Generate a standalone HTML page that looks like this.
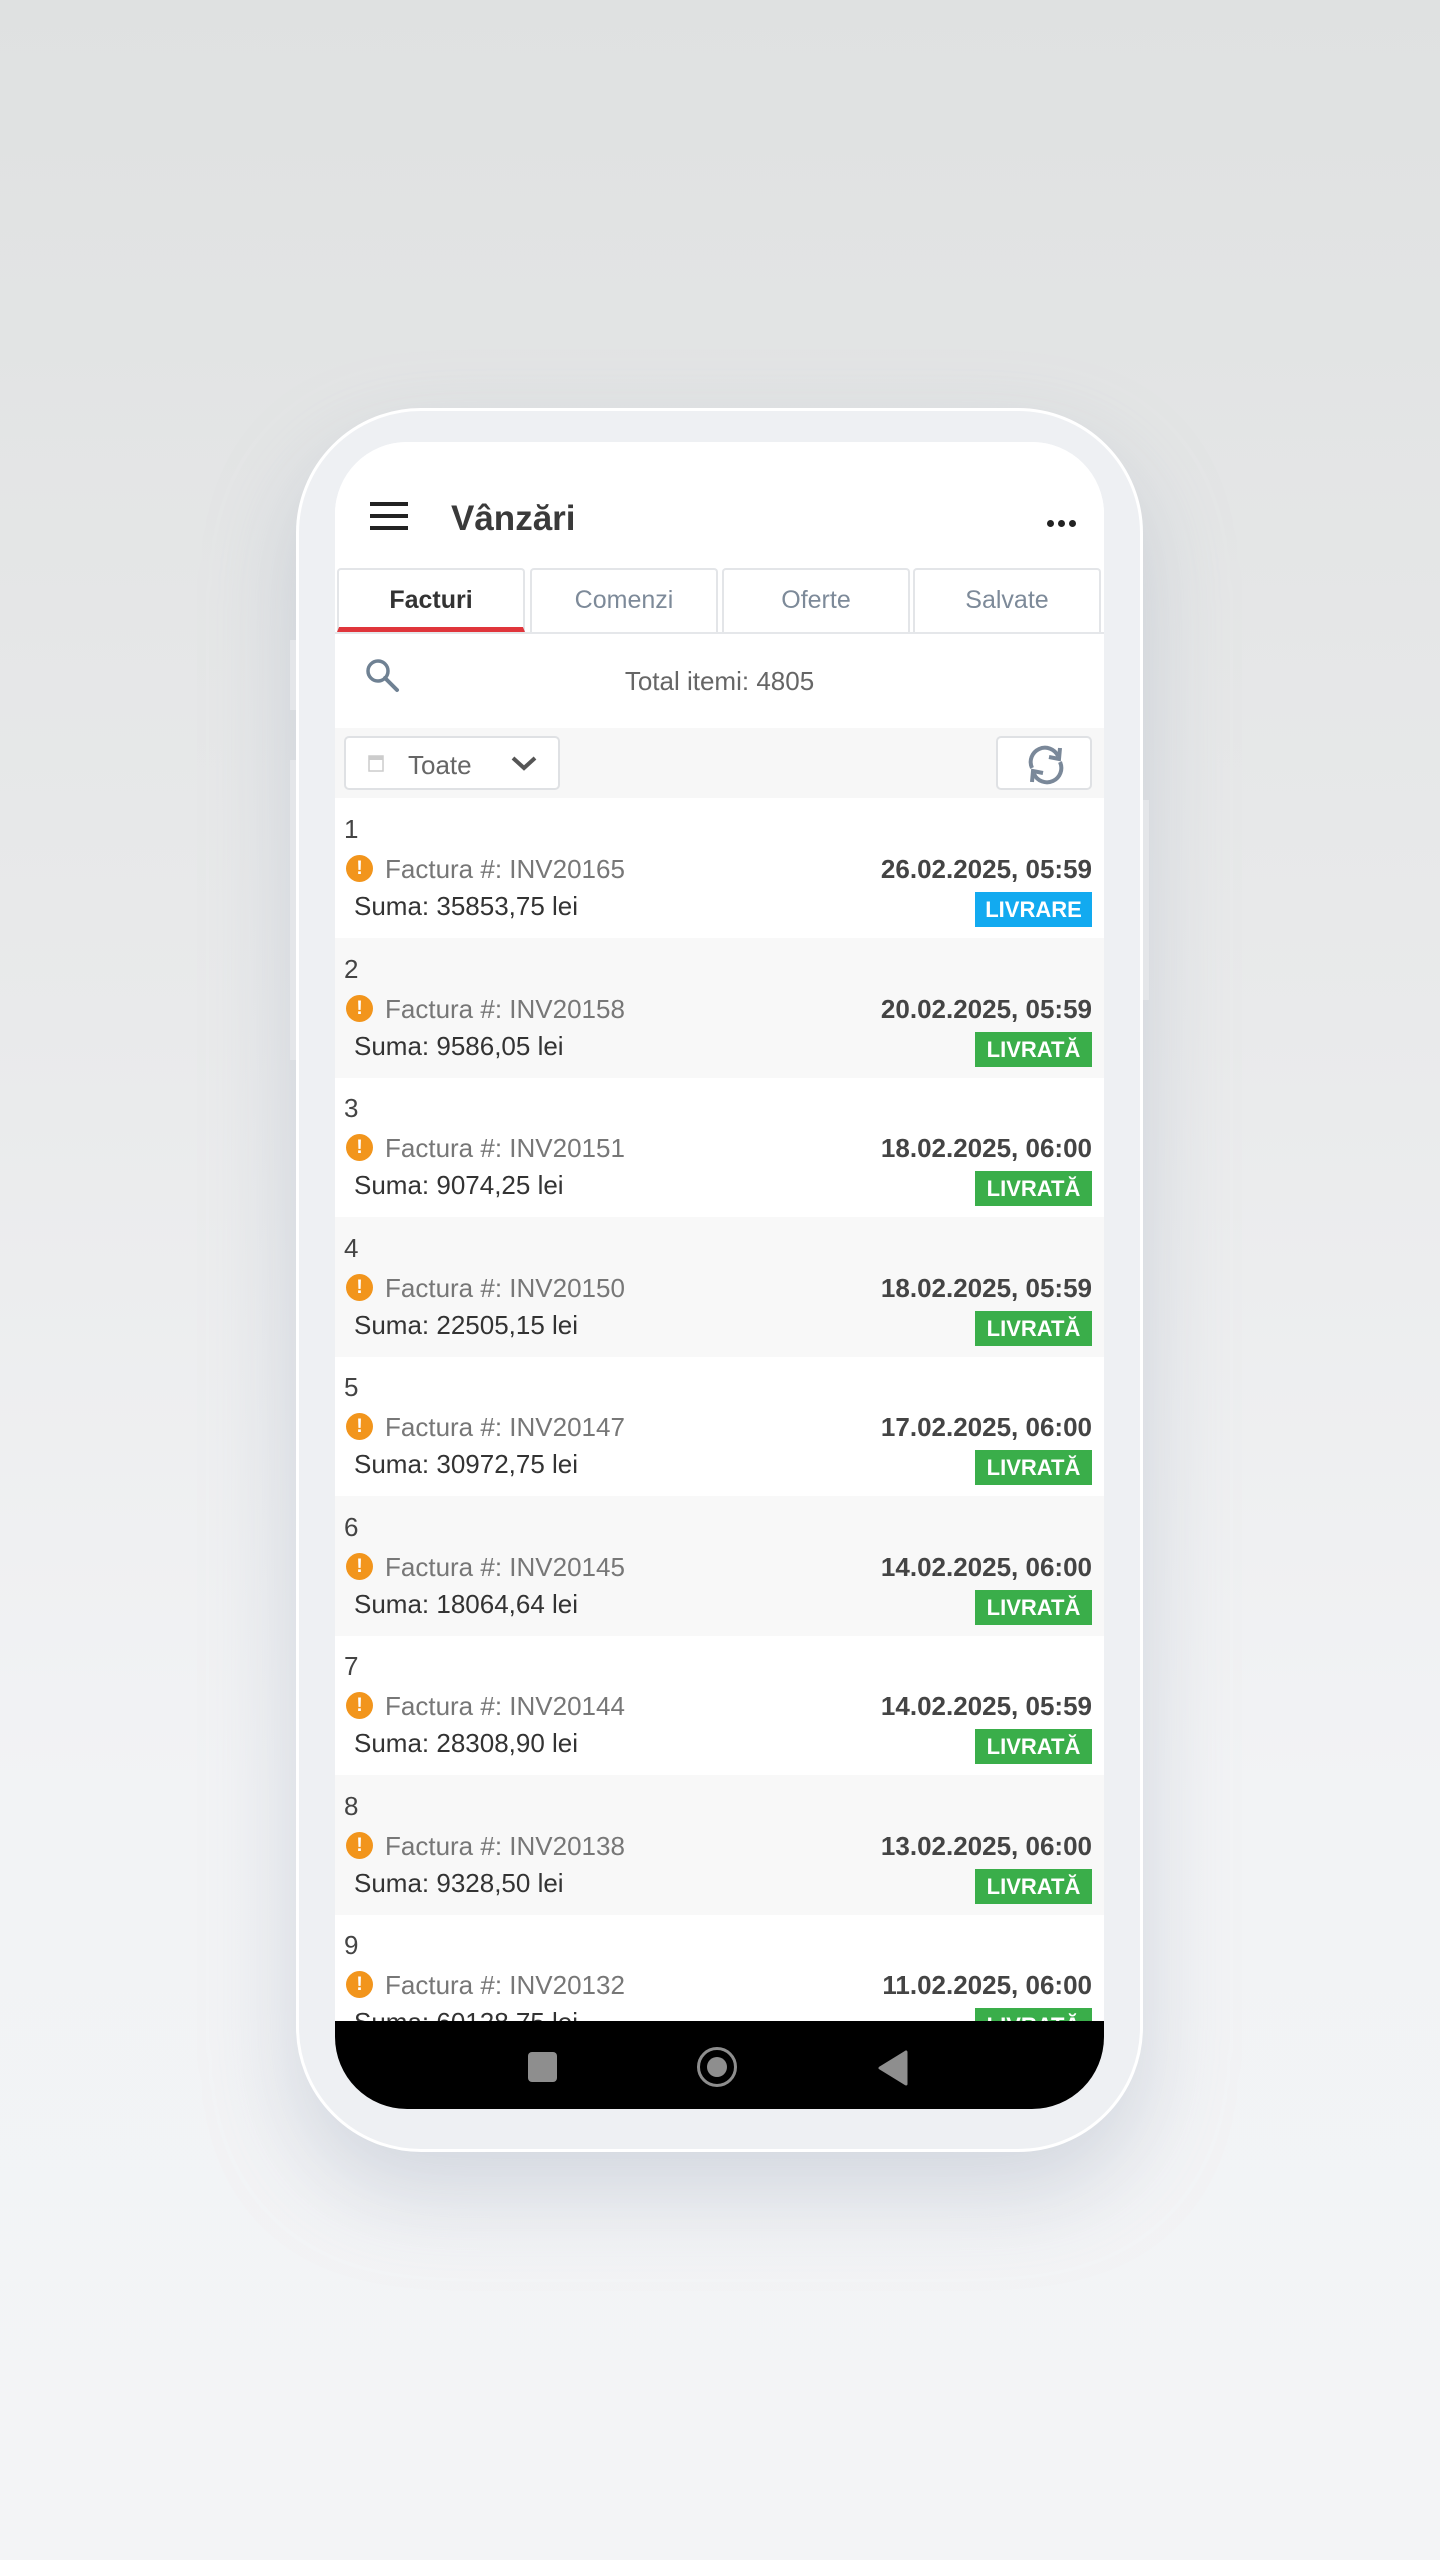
<!DOCTYPE html>
<html><head><meta charset="utf-8"><style>
*{margin:0;padding:0;box-sizing:border-box}
body{width:1440px;height:2560px;background:linear-gradient(#dfe1e1 0%,#e9eaeb 40%,#f2f3f5 70%,#f3f4f6 100%);font-family:"Liberation Sans",sans-serif;position:relative;overflow:hidden}
.phone{position:absolute;left:296px;top:408px;width:847px;height:1744px;border-radius:125px;background:#eef0f3;border:3px solid #fff;box-shadow:0 40px 90px rgba(150,160,180,.35)}
.btn{position:absolute;background:#e4e6e9;width:6px}
.screen{position:absolute;left:335px;top:442px;width:769px;height:1667px;border-radius:72px;background:#fff;overflow:hidden}
.hdr{position:absolute;left:0;top:0;width:769px;height:124px;background:#fff}
.ham{position:absolute;left:35px;top:60px;width:38px;height:28px}
.ham i{display:block;height:4px;background:#222;margin-bottom:8px}
.title{position:absolute;left:116px;top:57px;font-size:35px;color:#3a3a3a;font-weight:bold}
.dots{position:absolute;right:28px;top:72px}
.dots i{display:inline-block;width:7px;height:7px;border-radius:50%;background:#222;margin-left:4px}
.tabs{position:absolute;top:124px;left:0;width:769px;height:68px;border-bottom:2px solid #e5e7ea}
.tab{position:absolute;top:2px;height:64px;width:188px;border:2px solid #e3e5e8;border-bottom:none;border-radius:4px 4px 0 0;text-align:center;line-height:60px;font-size:25px;color:#7d8a99}
.tab.a{color:#333;border-bottom:5px solid #e0353b;font-weight:bold}
.srch{position:absolute;top:192px;left:0;width:769px;height:94px}
.total{position:absolute;left:0;width:769px;text-align:center;top:32px;font-size:26px;color:#666}
.filt{position:absolute;top:286px;left:0;width:769px;height:70px;background:#f7f7f7}
.box{position:absolute;background:#fff;border:2px solid #dfe1e4;border-radius:5px}
.row{position:absolute;left:0;width:769px;height:140px}
.row.g{background:#f8f8f8}
.n{position:absolute;left:9px;top:16px;font-size:26px;color:#444}
.ic{position:absolute;left:11px;top:57px;width:27px;height:27px;border-radius:50%;background:#f2951c;color:#fff;font-size:19px;font-weight:bold;text-align:center;line-height:27px}
.f{position:absolute;left:50px;top:56px;font-size:26px;color:#777}
.s{position:absolute;left:19px;top:93px;font-size:26px;color:#333}
.d{position:absolute;right:12px;top:56px;font-size:26px;color:#444;font-weight:bold}
.b{position:absolute;right:12px;top:94px;height:35px;width:117px;background:#3aae4a;color:#fff;font-weight:bold;font-size:22px;text-align:center;line-height:36px}
.b.l{background:#12aaf0}
.nav{position:absolute;left:0;top:1579px;width:769px;height:88px;background:#000}
</style></head><body>
<div class="phone"></div>
<div class="btn" style="left:290px;top:640px;height:70px"></div>
<div class="btn" style="left:290px;top:760px;height:300px"></div>
<div class="btn" style="left:1143px;top:800px;height:200px"></div>
<div class="screen">
<div class="hdr">
<div class="ham"><i></i><i></i><i></i></div>
<div class="title">Vânzări</div>
<div class="dots"><i></i><i></i><i></i></div>
</div>
<div class="tabs">
<div class="tab a" style="left:2px">Facturi</div>
<div class="tab" style="left:195px">Comenzi</div>
<div class="tab" style="left:387px">Oferte</div>
<div class="tab" style="left:578px">Salvate</div>
</div>
<div class="srch">
<svg style="position:absolute;left:28px;top:22px" width="40" height="40" viewBox="0 0 40 40"><circle cx="15" cy="15" r="10" fill="none" stroke="#6f8193" stroke-width="3.5"/><path d="M22 22L34 34" stroke="#6f8193" stroke-width="4" stroke-linecap="round"/></svg>
<div class="total">Total itemi: 4805</div>
</div>
<div class="filt">
<div class="box" style="left:9px;top:8px;width:216px;height:54px">
<svg style="position:absolute;left:22px;top:16px" width="16" height="18" viewBox="0 0 16 18"><rect x="1" y="2" width="14" height="15" fill="none" stroke="#ccc" stroke-width="1.5"/><rect x="1" y="2" width="14" height="4" fill="#ccc"/></svg>
<span style="position:absolute;left:62px;top:12px;font-size:26px;color:#666">Toate</span>
<svg style="position:absolute;left:164px;top:16px" width="28" height="20" viewBox="0 0 28 20"><path d="M3 4L14 14L25 4" fill="none" stroke="#555" stroke-width="4"/></svg>
</div>
<div class="box" style="left:661px;top:8px;width:96px;height:54px">
<svg style="position:absolute;left:26px;top:6px" width="44" height="42" viewBox="0 0 44 42"><path d="M8 24A14 14 0 0 1 34 12" fill="none" stroke="#7a8899" stroke-width="4"/><path d="M36 4L35 15L25 13" fill="none" stroke="#7a8899" stroke-width="4"/><path d="M36 18A14 14 0 0 1 10 30" fill="none" stroke="#7a8899" stroke-width="4"/><path d="M8 38L9 27L19 29" fill="none" stroke="#7a8899" stroke-width="4"/></svg>
</div>
</div>

<div class="row" style="top:356px"><div class="n">1</div><div class="ic">!</div><div class="f">Factura #: INV20165</div><div class="s">Suma: 35853,75 lei</div><div class="d">26.02.2025, 05:59</div><div class="b l">LIVRARE</div></div>
<div class="row g" style="top:496px"><div class="n">2</div><div class="ic">!</div><div class="f">Factura #: INV20158</div><div class="s">Suma: 9586,05 lei</div><div class="d">20.02.2025, 05:59</div><div class="b">LIVRATĂ</div></div>
<div class="row" style="top:635px"><div class="n">3</div><div class="ic">!</div><div class="f">Factura #: INV20151</div><div class="s">Suma: 9074,25 lei</div><div class="d">18.02.2025, 06:00</div><div class="b">LIVRATĂ</div></div>
<div class="row g" style="top:775px"><div class="n">4</div><div class="ic">!</div><div class="f">Factura #: INV20150</div><div class="s">Suma: 22505,15 lei</div><div class="d">18.02.2025, 05:59</div><div class="b">LIVRATĂ</div></div>
<div class="row" style="top:914px"><div class="n">5</div><div class="ic">!</div><div class="f">Factura #: INV20147</div><div class="s">Suma: 30972,75 lei</div><div class="d">17.02.2025, 06:00</div><div class="b">LIVRATĂ</div></div>
<div class="row g" style="top:1054px"><div class="n">6</div><div class="ic">!</div><div class="f">Factura #: INV20145</div><div class="s">Suma: 18064,64 lei</div><div class="d">14.02.2025, 06:00</div><div class="b">LIVRATĂ</div></div>
<div class="row" style="top:1193px"><div class="n">7</div><div class="ic">!</div><div class="f">Factura #: INV20144</div><div class="s">Suma: 28308,90 lei</div><div class="d">14.02.2025, 05:59</div><div class="b">LIVRATĂ</div></div>
<div class="row g" style="top:1333px"><div class="n">8</div><div class="ic">!</div><div class="f">Factura #: INV20138</div><div class="s">Suma: 9328,50 lei</div><div class="d">13.02.2025, 06:00</div><div class="b">LIVRATĂ</div></div>
<div class="row" style="top:1472px"><div class="n">9</div><div class="ic">!</div><div class="f">Factura #: INV20132</div><div class="s">Suma: 60128,75 lei</div><div class="d">11.02.2025, 06:00</div><div class="b">LIVRATĂ</div></div>

<div class="nav">
<div style="position:absolute;left:193px;top:31px;width:29px;height:30px;border-radius:4px;background:#8e8e8e"></div>
<div style="position:absolute;left:362px;top:26px;width:40px;height:40px;border-radius:50%;border:3px solid #8e8e8e"><div style="position:absolute;left:7px;top:7px;width:20px;height:20px;border-radius:50%;background:#8e8e8e"></div></div>
<svg style="position:absolute;left:543px;top:29px" width="30" height="36" viewBox="0 0 30 36"><path d="M28 2L28 34L2 18Z" fill="#8e8e8e" stroke="#8e8e8e" stroke-width="3" stroke-linejoin="round"/></svg>
</div>
</div>
</body></html>
